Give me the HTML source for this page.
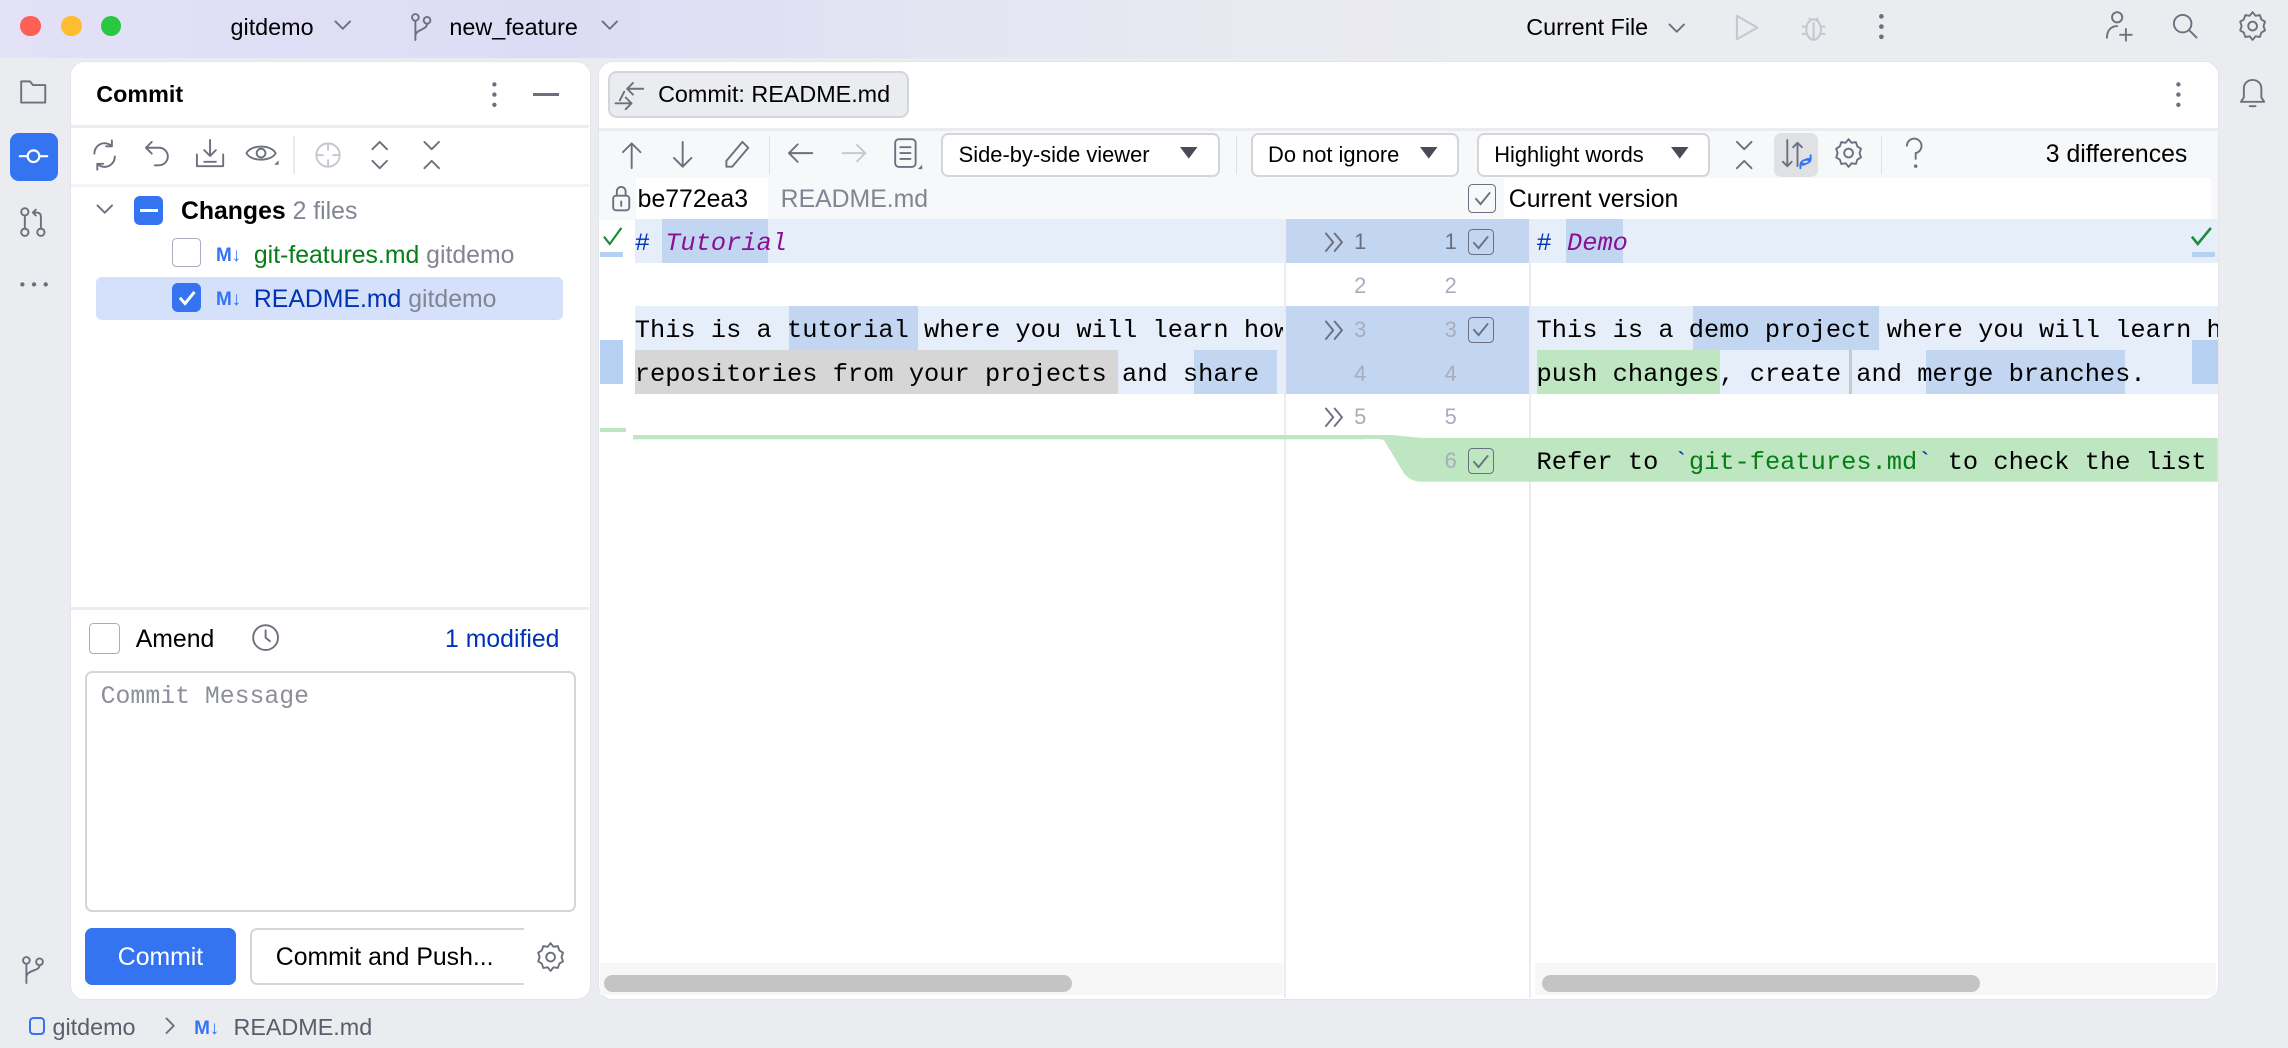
<!DOCTYPE html>
<html><head><meta charset="utf-8"><style>
*{box-sizing:border-box;margin:0;padding:0}
html,body{width:2288px;height:1048px;overflow:hidden;background:#ebecf0}
#r{position:relative;width:1568px;height:718px;zoom:1.45918;font-family:"Liberation Sans",sans-serif;color:#000;background:#ebecf0;overflow:hidden}
.a{position:absolute}
.t{position:absolute;white-space:nowrap;font-size:15.5px;line-height:20px}
.m{font-family:"Liberation Mono",monospace;font-size:17.4px;white-space:pre;position:absolute;line-height:30px;top:2px}
svg{position:absolute;overflow:visible}
.ic{fill:none;stroke:#6c707e;stroke-width:1.3;stroke-linecap:round;stroke-linejoin:round}
.num{position:absolute;font-size:15px;color:#a8adbd;line-height:30px;margin-top:1px}
.cb{position:absolute;width:18px;height:18px;border:1.3px solid #6c707e;border-radius:3px}
</style></head><body><div id="r">
<div class="a" style="left:0;top:0;width:1568px;height:40px;background:linear-gradient(90deg,#e2e1f6 0%,#dcdcf5 25%,#e6e6f2 45%,#ebecf0 65%)"></div>
<div class="a" style="left:14px;top:11px;width:14px;height:14px;border-radius:50%;background:#fe5f57"></div>
<div class="a" style="left:42px;top:11px;width:14px;height:14px;border-radius:50%;background:#febc2e"></div>
<div class="a" style="left:69px;top:11px;width:14px;height:14px;border-radius:50%;background:#28c840"></div>
<div class="t" style="left:158px;top:9px;font-size:16px">gitdemo</div>
<svg style="left:229px;top:14px" width="12" height="8"><path class="ic" d="M1 1l5 5 5-5"/></svg>
<svg style="left:282px;top:9px" width="14" height="20"><circle class="ic" cx="3" cy="3" r="2.3"/><circle class="ic" cx="11" cy="5" r="2.3"/><path class="ic" d="M3 5.5v13M11 7.5c0 4-8 4-8 8"/></svg>
<div class="t" style="left:308px;top:9px;font-size:16px">new_feature</div>
<svg style="left:412px;top:14px" width="12" height="8"><path class="ic" d="M1 1l5 5 5-5"/></svg>
<div class="t" style="left:1046px;top:9px;font-size:16px">Current File</div>
<svg style="left:1143px;top:16px" width="12" height="8"><path class="ic" d="M1 1l5 5 5-5"/></svg>
<svg style="left:1188px;top:9px" width="18" height="20"><path d="M2 2l14 8-14 8z" fill="none" stroke="#c4c7d0" stroke-width="1.4" stroke-linejoin="round"/></svg>
<svg style="left:1233px;top:8px" width="20" height="22"><g fill="none" stroke="#c4c7d0" stroke-width="1.4"><ellipse cx="10" cy="12" rx="5" ry="7"/><path d="M7 4l1.5 2M13 4l-1.5 2M2 10h3M15 10h3M2 15h3M15 15h3M10 7v12"/></g></svg>
<svg style="left:1286px;top:8px" width="6" height="20"><g fill="#6c707e"><circle cx="3" cy="3" r="1.6"/><circle cx="3" cy="10" r="1.6"/><circle cx="3" cy="17" r="1.6"/></g></svg>
<svg style="left:1442px;top:7px" width="22" height="22"><circle class="ic" cx="9" cy="5" r="3.5"/><path class="ic" d="M2 19c0-5 3-8 7-8M15 13v8M11 17h8"/></svg>
<svg style="left:1488px;top:8px" width="20" height="20"><circle class="ic" cx="8" cy="8" r="6"/><path class="ic" d="M12.5 12.5l5 5"/></svg>
<svg style="left:1534px;top:7px" width="20" height="22"><path class="ic" d="M10 1.5l2 2.5 3-.5 1 3 2.5 1.5-1 3 1 3-2.5 1.5-1 3-3-.5-2 2.5-2-2.5-3 .5-1-3-2.5-1.5 1-3-1-3 2.5-1.5 1-3 3 .5z"/><circle class="ic" cx="10" cy="11" r="3"/></svg>

<svg style="left:13px;top:53px" width="20" height="20"><path class="ic" d="M1.5 3h6l2 2.5h8.5v12h-16.5z"/></svg>
<div class="a" style="left:7px;top:91px;width:33px;height:33px;border-radius:6px;background:#3574f0"></div>
<svg style="left:11px;top:100px" width="24" height="14"><g fill="none" stroke="#fff" stroke-width="1.5"><circle cx="12" cy="7" r="4"/><path d="M2 7h6M16 7h6"/></g></svg>
<svg style="left:13px;top:141px" width="20" height="22"><circle class="ic" cx="4" cy="4" r="2.5"/><circle class="ic" cx="4" cy="18" r="2.5"/><circle class="ic" cx="15" cy="18" r="2.5"/><path class="ic" d="M4 6.5v9M15 15.5v-8c0-2-1-3-3-3h-2M11.5 2.5l-2 2 2 2"/></svg>
<svg style="left:12px;top:192px" width="22" height="6"><g fill="#6c707e"><circle cx="3" cy="3" r="1.5"/><circle cx="11" cy="3" r="1.5"/><circle cx="19" cy="3" r="1.5"/></g></svg>
<svg style="left:15px;top:655px" width="16" height="20"><circle class="ic" cx="3" cy="3" r="2.3"/><circle class="ic" cx="12" cy="4" r="2.3"/><path class="ic" d="M3 5.5v13M12 6.5c0 4-9 3-9 8"/></svg>
<svg style="left:1534px;top:53px" width="20" height="24"><path class="ic" d="M10 2c-4 0-6 3-6 6v6l-2 3h16l-2-3v-6c0-3-2-6-6-6zM8 20h4"/></svg>

<div class="a" style="left:48px;top:42px;width:357px;height:643px;background:#fff;border-radius:10px;border:1px solid #e4e5ea"></div>
<div class="t" style="left:66px;top:55px;font-weight:bold;font-size:16px">Commit</div>
<svg style="left:336px;top:55px" width="6" height="20"><g fill="#6c707e"><circle cx="3" cy="3" r="1.5"/><circle cx="3" cy="10" r="1.5"/><circle cx="3" cy="17" r="1.5"/></g></svg>
<div class="a" style="left:365px;top:64px;width:18px;height:1.5px;background:#6c707e"></div>
<div class="a" style="left:49px;top:86px;width:355px;height:2px;background:#ebecf0"></div>
<svg style="left:62px;top:95px" width="20" height="22"><path class="ic" d="M3 10a7 7 0 0 1 12-5M17 12a7 7 0 0 1-12 5M15 1v4h-4M5 21v-4h4"/></svg>
<svg style="left:98px;top:95px" width="20" height="22"><path class="ic" d="M6 2l-4 4 4 4M2 6h9a6 6 0 0 1 0 12h-3"/></svg>
<svg style="left:133px;top:94px" width="22" height="22"><path class="ic" d="M11 2v11M7 9l4 4 4-4M2 12v8h18v-8M7 17h8"/></svg>
<svg style="left:168px;top:96px" width="24" height="20"><path class="ic" d="M1 9c3-6 17-6 20 0c-3 6-17 6-20 0z"/><circle class="ic" cx="11" cy="9" r="3"/><path d="M20 17l3-3v3z" fill="#6c707e"/></svg>
<div class="a" style="left:201px;top:93px;width:1px;height:26px;background:#ebecf0"></div>
<svg style="left:214px;top:95px" width="22" height="22"><g fill="none" stroke="#c4c7d0" stroke-width="1.3"><circle cx="11" cy="11" r="8"/><path d="M11 3v5M11 14v5M3 11h5M14 11h5"/></g></svg>
<svg style="left:252px;top:95px" width="16" height="22"><path class="ic" d="M3 7l5-5 5 5M3 15l5 5 5-5"/></svg>
<svg style="left:288px;top:95px" width="16" height="22"><path class="ic" d="M3 2l5 5 5-5M3 20l5-5 5 5"/></svg>
<div class="a" style="left:49px;top:126px;width:355px;height:2px;background:#f2f3f5"></div>
<svg style="left:66px;top:140px" width="12" height="8"><path class="ic" d="M1 1l5 5 5-5"/></svg>
<div class="a" style="left:92px;top:134px;width:20px;height:20px;border-radius:4px;background:#3574f0"></div>
<div class="a" style="left:96px;top:143px;width:12px;height:2px;background:#fff"></div>
<div class="t" style="left:124px;top:135px;font-weight:bold;font-size:17px">Changes <span style="font-weight:normal;color:#818594">2 files</span></div>
<div class="cb" style="left:118px;top:163px;width:20px;height:20px;border-color:#a8adbd"></div>
<div class="t" style="left:148px;top:165px;font-weight:bold;color:#3574f0;font-size:13px">M↓</div>
<div class="t" style="left:174px;top:165px;color:#067d17;font-size:17px">git-features.md <span style="color:#818594">gitdemo</span></div>
<div class="a" style="left:66px;top:190px;width:320px;height:29px;background:#d5e1fb;border-radius:4px"></div>
<div class="a" style="left:118px;top:194px;width:20px;height:20px;border-radius:4px;background:#3574f0"></div>
<svg style="left:121px;top:198px" width="14" height="12"><path d="M2 6l3.5 4L12 2" fill="none" stroke="#fff" stroke-width="2"/></svg>
<div class="t" style="left:148px;top:195px;font-weight:bold;color:#3574f0;font-size:13px">M↓</div>
<div class="t" style="left:174px;top:195px;color:#0033b3;font-size:17px">README.md <span style="color:#818594">gitdemo</span></div>
<div class="a" style="left:49px;top:416px;width:355px;height:2px;background:#ebecf0"></div>
<div class="cb" style="left:61px;top:427px;width:21px;height:21px;border-color:#a8adbd"></div>
<div class="t" style="left:93px;top:428px;font-size:17px">Amend</div>
<svg style="left:172px;top:427px" width="22" height="22"><circle class="ic" cx="10" cy="10" r="8.5"/><path class="ic" d="M10 5v5l3 2.5"/></svg>
<div class="t" style="left:305px;top:428px;font-size:17px;color:#0033b3">1 modified</div>
<div class="a" style="left:58px;top:460px;width:337px;height:165px;border:1.5px solid #d3d5db;border-radius:5px"></div>
<div class="t" style="left:69px;top:468px;font-family:'Liberation Mono',monospace;font-size:17px;color:#8c8f99">Commit Message</div>
<div class="a" style="left:58px;top:636px;width:104px;height:39px;background:#3574f0;border-radius:5px"></div>
<div class="t" style="left:58px;top:646px;width:104px;text-align:center;color:#fff;font-size:17px">Commit</div>
<div class="a" style="left:171px;top:636px;width:188px;height:39px;border:1.5px solid #d3d5db;border-right:none;border-radius:5px 0 0 5px"></div>
<div class="t" style="left:189px;top:646px;font-size:17px">Commit and Push...</div>
<svg style="left:367px;top:645px" width="20" height="22"><path class="ic" d="M10 1.5l2 2.5 3-.5 1 3 2.5 1.5-1 3 1 3-2.5 1.5-1 3-3-.5-2 2.5-2-2.5-3 .5-1-3-2.5-1.5 1-3-1-3 2.5-1.5 1-3 3 .5z"/><circle class="ic" cx="10" cy="11" r="3"/></svg>

<div class="a" style="left:410px;top:42px;width:1111px;height:643px;background:#fff;border-radius:10px;border:1px solid #e4e5ea;overflow:hidden">
 <div class="a" style="left:0;top:45px;width:1111px;height:2px;background:#ebecf0"></div>
 <div class="a" style="left:0;top:47px;width:1111px;height:33px;background:#f7f8fa"></div>
 <div class="a" style="left:0;top:80px;width:1111px;height:28px;background:#f7f8fa"></div>
</div>
<div class="a" style="left:417px;top:49px;width:206px;height:32px;background:#ebecf0;border:1.5px solid #d3d5db;border-radius:6px"></div>
<svg style="left:421px;top:55px" width="24" height="22"><path class="ic" d="M9 6h11M13 2l-4 4 4 4M1 16h10M8 12l4 4-4 4M7 8l-3 6"/></svg>
<div class="t" style="left:451px;top:55px;font-size:16px">Commit: README.md</div>
<svg style="left:1490px;top:55px" width="6" height="20"><g fill="#6c707e"><circle cx="3" cy="3" r="1.5"/><circle cx="3" cy="10" r="1.5"/><circle cx="3" cy="17" r="1.5"/></g></svg>
<svg style="left:425px;top:95px" width="16" height="22"><path class="ic" d="M8 20V3M2 9l6-6 6 6"/></svg>
<svg style="left:460px;top:95px" width="16" height="22"><path class="ic" d="M8 2v17M2 13l6 6 6-6"/></svg>
<svg style="left:495px;top:95px" width="20" height="22"><path class="ic" d="M14 2l4 4L7 19H3v-4z"/></svg>
<div class="a" style="left:527px;top:93px;width:1px;height:26px;background:#dfe1e5"></div>
<svg style="left:539px;top:96px" width="20" height="18"><path class="ic" d="M18 9H2M8 3L2 9l6 6"/></svg>
<svg style="left:575px;top:96px" width="20" height="18"><path d="M2 9h16M12 3l6 6-6 6" fill="none" stroke="#c4c7d0" stroke-width="1.3"/></svg>
<svg style="left:612px;top:94px" width="24" height="26"><rect class="ic" x="1.5" y="1.5" width="14" height="19" rx="2.5"/><path class="ic" d="M5 7h7M5 11h7M5 15h7"/><path d="M20 19l-3 3h3z" fill="#6c707e"/></svg>
<div class="a" style="left:645px;top:91px;width:191px;height:30px;border:1.5px solid #d3d5db;border-radius:5px;background:#fff"></div>
<div class="t" style="left:657px;top:96px;font-size:15px">Side-by-side viewer</div>
<svg style="left:809px;top:101px" width="12" height="10"><path d="M0 0h12L6 8z" fill="#494b57"/></svg>
<div class="a" style="left:847px;top:93px;width:1px;height:26px;background:#dfe1e5"></div>
<div class="a" style="left:857px;top:91px;width:143px;height:30px;border:1.5px solid #d3d5db;border-radius:5px;background:#fff"></div>
<div class="t" style="left:869px;top:96px;font-size:15px">Do not ignore</div>
<svg style="left:973px;top:101px" width="12" height="10"><path d="M0 0h12L6 8z" fill="#494b57"/></svg>
<div class="a" style="left:1012px;top:91px;width:160px;height:30px;border:1.5px solid #d3d5db;border-radius:5px;background:#fff"></div>
<div class="t" style="left:1024px;top:96px;font-size:15px">Highlight words</div>
<svg style="left:1145px;top:101px" width="12" height="10"><path d="M0 0h12L6 8z" fill="#494b57"/></svg>
<svg style="left:1188px;top:95px" width="14" height="22"><path class="ic" d="M2 2l5 5 5-5M2 20l5-5 5 5"/></svg>
<div class="a" style="left:1216px;top:91px;width:30px;height:30px;background:#dfe1e5;border-radius:5px"></div>
<svg style="left:1220px;top:94px" width="24" height="26"><path class="ic" d="M5 2v18M2 17l3 3 3-3M12 20V4M9 7l3-3 3 3"/><path d="M21 15a4 4 0 0 1-7 2M14 19a4 4 0 0 1 7-2M21 12v3h-3M14 22v-3h3" fill="none" stroke="#3574f0" stroke-width="1.3"/></svg>
<svg style="left:1257px;top:94px" width="20" height="22"><path class="ic" d="M10 1.5l2 2.5 3-.5 1 3 2.5 1.5-1 3 1 3-2.5 1.5-1 3-3-.5-2 2.5-2-2.5-3 .5-1-3-2.5-1.5 1-3-1-3 2.5-1.5 1-3 3 .5z"/><circle class="ic" cx="10" cy="11" r="3"/></svg>
<div class="a" style="left:1289px;top:93px;width:1px;height:26px;background:#dfe1e5"></div>
<svg style="left:1305px;top:94px" width="14" height="24"><path class="ic" d="M2 6a5 5 0 1 1 6 5v4"/><circle cx="8" cy="20" r="1.2" fill="#6c707e"/></svg>
<div class="t" style="left:1402px;top:96px;font-size:17px">3 differences</div>
<div class="a" style="left:411px;top:122px;width:1109px;height:28px;background:#f7f8fa"></div>
<svg style="left:419px;top:126px" width="14" height="20"><rect class="ic" x="1.5" y="8" width="11" height="10" rx="2"/><path class="ic" d="M4 8V5a3 3 0 0 1 6 0v3M7 12v3"/></svg>
<div class="a" style="left:436px;top:122px;width:90px;height:28px;background:#fff"></div>
<div class="t" style="left:437px;top:127px;font-size:17px">be772ea3</div>
<div class="t" style="left:535px;top:127px;font-size:17px;color:#818594">README.md</div>
<div class="cb" style="left:1006px;top:126px;width:19px;height:20px"></div>
<svg style="left:1010px;top:131px" width="12" height="10"><path d="M1 5l3.5 4L11 1" fill="none" stroke="#6c707e" stroke-width="1.3"/></svg>
<div class="a" style="left:1031px;top:122px;width:484px;height:28px;background:#fff"></div>
<div class="t" style="left:1034px;top:127px;font-size:17px">Current version</div>

<div class="a" style="left:435px;top:150px;width:445px;height:30px;background:#e6eef9"></div>
<div class="a" style="left:435px;top:210px;width:445px;height:60px;background:#e6eef9"></div>
<div class="a" style="left:881px;top:150px;width:167px;height:30px;background:#c3d6f1"></div>
<div class="a" style="left:881px;top:210px;width:167px;height:60px;background:#c3d6f1"></div>
<div class="a" style="left:1049px;top:150px;width:471px;height:30px;background:#e6eef9"></div>
<div class="a" style="left:1049px;top:210px;width:471px;height:60px;background:#e6eef9"></div>
<div class="a" style="left:880px;top:150px;width:1px;height:534px;background:#ebecf0"></div>
<div class="a" style="left:1048px;top:150px;width:1px;height:534px;background:#ebecf0"></div>
<svg style="left:434px;top:298px" width="1086" height="33"><path d="M0 0H520L540 2H1086V32H541Q531 32 527 24L515 4Q513 2 500 3H0z" fill="#bee6c1"/></svg>
<div class="a" style="left:411px;top:293px;width:18px;height:3px;background:#bee6c1"></div>
<div class="a" style="left:411px;top:173px;width:16px;height:3px;background:#b5d0f1"></div>
<svg style="left:412px;top:154px" width="16" height="16"><path d="M2 8l4 5 8-11" fill="none" stroke="#208a3c" stroke-width="1.5"/></svg>
<div class="a" style="left:411px;top:233px;width:16px;height:30px;background:#b5d0f1"></div>
<div class="a" style="left:1502px;top:173px;width:16px;height:3px;background:#b5d0f1"></div>
<svg style="left:1500px;top:154px" width="18" height="16"><path d="M2 8l4 5 9-11" fill="none" stroke="#208a3c" stroke-width="1.8"/></svg>
<div class="a" style="left:1502px;top:233px;width:18px;height:30px;background:#b5d0f1"></div>
<div class="a" style="left:454px;top:150px;width:72px;height:30px;background:#c3d6f1"></div>
<div class="a" style="left:541px;top:210px;width:88px;height:30px;background:#c3d6f1"></div>
<div class="a" style="left:435px;top:240px;width:331px;height:30px;background:#d6d6d6"></div>
<div class="a" style="left:818px;top:240px;width:57px;height:30px;background:#c3d6f1"></div>
<div class="a" style="left:1073px;top:150px;width:39px;height:30px;background:#c3d6f1"></div>
<div class="a" style="left:1160px;top:210px;width:128px;height:30px;background:#c3d6f1"></div>
<div class="a" style="left:1053px;top:240px;width:126px;height:30px;background:#bee6c1"></div>
<div class="a" style="left:1267px;top:240px;width:2px;height:30px;background:#c9c9c9"></div>
<div class="a" style="left:1320px;top:240px;width:136px;height:30px;background:#c3d6f1"></div>
<div style="position:absolute;left:435px;top:150px;width:444px;height:150px;overflow:hidden">
<div class="m" style="left:0;top:2px"><span style="color:#0033b3"># </span><i style="color:#871094">Tutorial</i></div>
<div class="m" style="left:0;top:62px">This is a tutorial where you will learn how</div>
<div class="m" style="left:0;top:92px">repositories from your projects and share</div>
</div>
<div style="position:absolute;left:1053px;top:150px;width:467px;height:180px;overflow:hidden">
<div class="m" style="left:0;top:2px"><span style="color:#0033b3"># </span><i style="color:#871094">Demo</i></div>
<div class="m" style="left:0;top:62px">This is a demo project where you will learn how</div>
<div class="m" style="left:0;top:92px">push changes, create and merge branches.</div>
<div class="m" style="left:0;top:152px">Refer to <span style="color:#0033b3">`</span><span style="color:#067d17">git-features.md</span><span style="color:#0033b3">`</span> to check the list</div>
</div>
<div class="num" style="left:928px;top:150px;color:#6c707e">1</div>
<div class="num" style="left:928px;top:180px">2</div>
<div class="num" style="left:928px;top:210px">3</div>
<div class="num" style="left:928px;top:240px">4</div>
<div class="num" style="left:928px;top:270px">5</div>
<div class="num" style="left:990px;top:150px;color:#6c707e">1</div>
<div class="num" style="left:990px;top:180px">2</div>
<div class="num" style="left:990px;top:210px">3</div>
<div class="num" style="left:990px;top:240px">4</div>
<div class="num" style="left:990px;top:270px">5</div>
<div class="num" style="left:990px;top:300px">6</div>
<svg style="left:907px;top:159px" width="16" height="14"><path class="ic" d="M2 1l5 6-5 6M8 1l5 6-5 6"/></svg>
<svg style="left:907px;top:219px" width="16" height="14"><path class="ic" d="M2 1l5 6-5 6M8 1l5 6-5 6"/></svg>
<svg style="left:907px;top:279px" width="16" height="14"><path class="ic" d="M2 1l5 6-5 6M8 1l5 6-5 6"/></svg>
<div class="cb" style="left:1006px;top:157px"></div><svg style="left:1009px;top:161px" width="12" height="10"><path d="M1 5l3.5 4L11 1" fill="none" stroke="#6c707e" stroke-width="1.3"/></svg>
<div class="cb" style="left:1006px;top:217px"></div><svg style="left:1009px;top:221px" width="12" height="10"><path d="M1 5l3.5 4L11 1" fill="none" stroke="#6c707e" stroke-width="1.3"/></svg>
<div class="cb" style="left:1006px;top:307px"></div><svg style="left:1009px;top:311px" width="12" height="10"><path d="M1 5l3.5 4L11 1" fill="none" stroke="#6c707e" stroke-width="1.3"/></svg>
<div class="a" style="left:411px;top:660px;width:468px;height:22px;background:#f7f7f7"></div>
<div class="a" style="left:414px;top:668px;width:321px;height:12px;background:#c4c4c4;border-radius:6px"></div>
<div class="a" style="left:1052px;top:660px;width:467px;height:22px;background:#f7f7f7"></div>
<div class="a" style="left:1057px;top:668px;width:300px;height:12px;background:#c4c4c4;border-radius:6px"></div>

<div class="a" style="left:20px;top:697px;width:11px;height:12px;border:1.5px solid #3574f0;border-radius:3px"></div>
<div class="t" style="left:36px;top:694px;font-size:16px;color:#5a5d6b">gitdemo</div>
<svg style="left:113px;top:697px" width="8" height="12"><path class="ic" d="M1 1l5 5-5 5"/></svg>
<div class="t" style="left:133px;top:695px;font-weight:bold;color:#3574f0;font-size:13px">M↓</div>
<div class="t" style="left:160px;top:694px;font-size:16px;color:#5a5d6b">README.md</div>
</div></body></html>
